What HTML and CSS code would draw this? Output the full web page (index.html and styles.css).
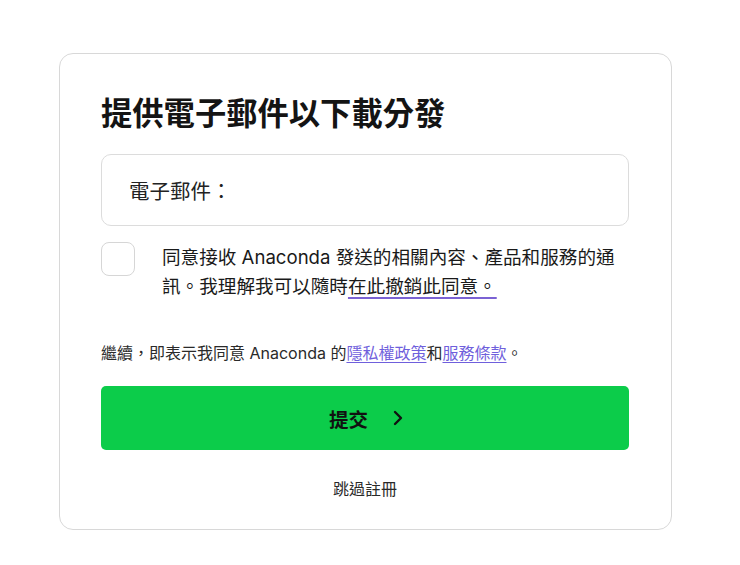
FILE: index.html
```html
<!DOCTYPE html>
<html lang="zh-Hant">
<head>
<meta charset="utf-8">
<link rel="stylesheet" href="styles.css">
</head>
<body>
<div class="card">
  <h1 class="title">提供電子郵件以下載分發</h1>
  <div class="field"><span class="label">電子郵件：</span></div>
  <div class="consent">
    <span class="box"></span>
    <p class="consent-text">同意接收 Anaconda 發送的相關內容、產品和服務的通訊。我理解我可以隨時<a class="revoke" href="#">在此撤銷此同意。</a></p>
  </div>
  <p class="legal">繼續，即表示我同意 Anaconda 的<a class="link" href="#">隱私權政策</a>和<a class="link" href="#">服務條款</a>。</p>
  <button class="submit"><span>提交</span><svg class="chev" width="14" height="16" viewBox="0 0 14 16"><path d="M4 2 L10 8 L4 14" fill="none" stroke="#111" stroke-width="2.4" stroke-linecap="round" stroke-linejoin="round"/></svg></button>
  <p class="skip">跳過註冊</p>
</div>
</body>
</html>
```
FILE: styles.css
```css
* { box-sizing: border-box; }
body {
  margin: 0;
  padding: 53px 0 0 59px;
  background: #fff;
  font-family: Inter, "Noto Sans CJK TC", "Noto Sans", sans-serif;
  color: #1a1a1a;
}
.card {
  width: 613px;
  height: 477px;
  border: 1px solid #d8d8d8;
  border-radius: 14px;
  padding: 40px 42px 0 41px;
  display: flex;
  flex-direction: column;
}
.title {
  margin: 0 0 20px;
  font-size: 31.3px;
  line-height: 40px;
  font-weight: 700;
  color: #141414;
}
.field {
  height: 72px;
  border: 1px solid #dcdcdc;
  border-radius: 10px;
  display: flex;
  align-items: center;
  padding-left: 27px;
  margin-bottom: 16px;
}
.label {
  font-size: 20.5px;
  color: #222;
}
.consent {
  display: flex;
  align-items: flex-start;
}
.box {
  flex: none;
  width: 34px;
  height: 34px;
  border: 1px solid #d6d6d6;
  border-radius: 8px;
}
.consent-text {
  margin: 1px 0 0 27px;
  font-size: 18.6px;
  line-height: 29px;
  color: #1a1a1a;
}
.revoke {
  color: #1a1a1a;
  text-decoration: underline;
  text-decoration-color: #7b62d4;
  text-decoration-thickness: 2px;
  text-underline-offset: 4px;
}
.legal {
  margin: 40px 0 0;
  font-size: 16px;
  line-height: 24px;
  color: #2a2a2a;
}
.link {
  color: #6f5fdc;
  text-decoration: underline;
  text-underline-offset: 3px;
}
.submit {
  margin-top: 21px;
  height: 64px;
  border: none;
  border-radius: 5px;
  background: #0ccc4a;
  display: flex;
  align-items: center;
  justify-content: center;
  gap: 23px;
  font-family: inherit;
  font-size: 19.5px;
  font-weight: 700;
  color: #111;
  padding: 0 0 0 4px;
}
.chev { display: block; }
.skip {
  margin: 27px 0 0;
  text-align: center;
  font-size: 16px;
  line-height: 24px;
  color: #2a2a2a;
}
```
